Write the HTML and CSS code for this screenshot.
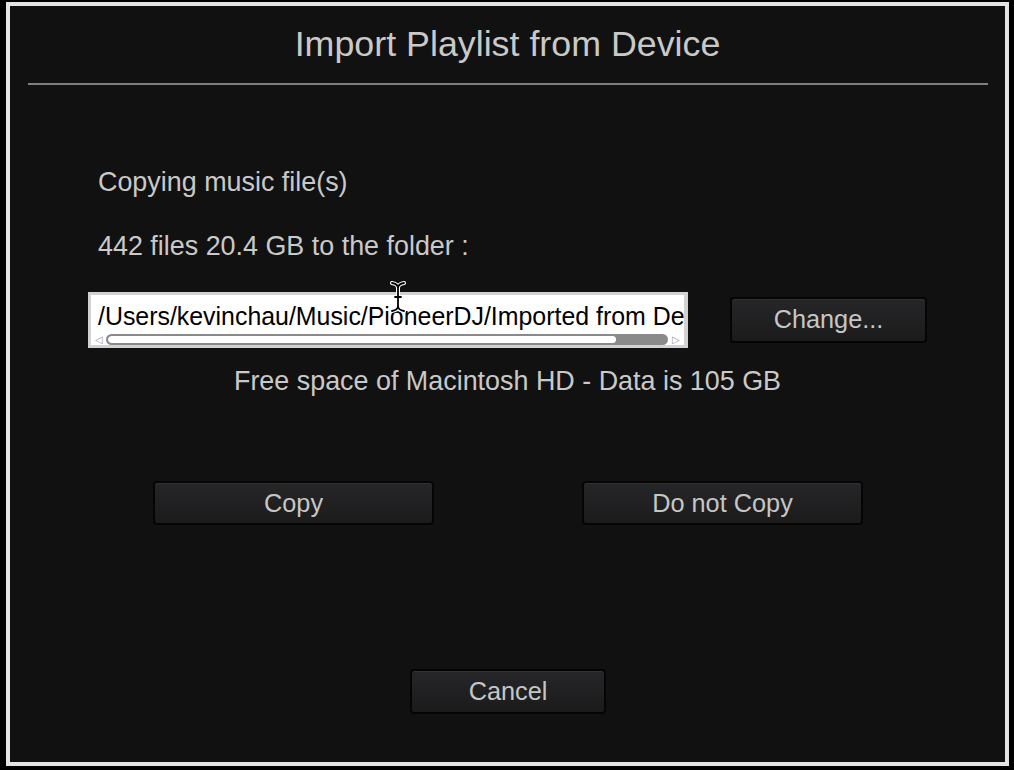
FILE: index.html
```html
<!DOCTYPE html>
<html>
<head>
<meta charset="utf-8">
<title>Import Playlist from Device</title>
<link rel="stylesheet" href="styles.css">
</head>
<body>
<div class="dialog">
  <div class="title">Import Playlist from Device</div>
  <div class="sep"></div>
  <div class="body">
    <p class="line first">Copying music file(s)</p>
    <p class="line second">442 files 20.4 GB to the folder :</p>
    <div class="pathrow">
      <div class="pathbox">
        <div class="pathtext">/Users/kevinchau/Music/PioneerDJ/Imported from Device/</div>
        <div class="scroll">
          <span class="arrow">&#9665;</span>
          <div class="track"><div class="thumb"></div></div>
          <span class="arrow">&#9655;</span>
        </div>
        <svg class="ibeam" width="18" height="32" viewBox="0 0 18 32">
          <path d="M3 2 Q9 3 9 7 Q9 3 15 2 M9 7 V25 M3 30 Q9 29 9 25 Q9 29 15 30 M6 16 H12" fill="none" stroke="#fff" stroke-width="4" stroke-linecap="round"/>
          <path d="M3 2 Q9 3 9 7 Q9 3 15 2 M9 7 V25 M3 30 Q9 29 9 25 Q9 29 15 30 M6 16 H12" fill="none" stroke="#000" stroke-width="1.8" stroke-linecap="round"/>
        </svg>
      </div>
      <button class="btn change">Change...</button>
    </div>
    <p class="line free">Free space of Macintosh HD - Data is 105 GB</p>
    <div class="choice">
      <button class="btn wide">Copy</button>
      <button class="btn wide">Do not Copy</button>
    </div>
    <div class="bottom">
      <button class="btn cancel">Cancel</button>
    </div>
  </div>
</div>
</body>
</html>
```

FILE: styles.css
```css
* { box-sizing: border-box; }
html, body { margin: 0; padding: 0; }
body {
  background: #000;
  width: 1014px;
  height: 770px;
  overflow: hidden;
  font-family: "Liberation Sans", Arial, Helvetica, sans-serif;
  padding: 2px 0 0 6px;
}
.dialog {
  width: 1003px;
  height: 764px;
  border: 4px solid #e4e4e4;
  background: #111111;
  display: flex;
  flex-direction: column;
}
.title {
  margin-top: 18px;
  height: 40px;
  line-height: 40px;
  text-align: center;
  font-size: 35.8px;
  color: #c9c9c9;
}
.sep {
  margin: 19px 17px 0 18px;
  height: 2px;
  background: #7e7e7e;
}
.body {
  flex: 1;
  display: flex;
  flex-direction: column;
}
.line {
  margin: 0;
  font-size: 26.9px;
  line-height: 32px;
  height: 32px;
  color: #c9c9c9;
  padding-left: 88px;
  white-space: nowrap;
}
.first { margin-top: 81px; }
.second { margin-top: 32px; }
.pathrow {
  margin-top: 30px;
  display: flex;
  align-items: center;
  padding-left: 78px;
}
.pathbox {
  position: relative;
  width: 600px;
  height: 56px;
  background: #fff;
  border: 3px solid #d2d2d2;
  border-right-width: 4px;
}
.pathtext {
  font-size: 24.9px;
  line-height: 28px;
  color: #000;
  white-space: nowrap;
  overflow: hidden;
  padding-left: 7px;
  margin-top: 7px;
  width: 593px;
}
.scroll {
  display: flex;
  align-items: center;
  height: 13px;
  margin-top: 3px;
  padding-left: 1px;
}
.arrow {
  font-size: 10px;
  color: #9a9a9a;
  width: 14px;
  text-align: center;
  line-height: 10px;
}
.track {
  width: 562px;
  height: 11px;
  border: 2px solid #8a8a8a;
  border-radius: 6px;
  background: #8a8a8a;
  overflow: hidden;
  margin: 0 1px 0 0;
}
.thumb {
  width: 508px;
  height: 100%;
  background: #fff;
  border-radius: 4px;
}
.ibeam {
  position: absolute;
  left: 298px;
  top: -14px;
}
.btn {
  font-family: "Liberation Sans", Arial, Helvetica, sans-serif;
  font-size: 25.3px;
  color: #c6c6c6;
  background: linear-gradient(#262628, #1b1b1c);
  border: 2px solid #050505;
  border-radius: 4px;
  box-shadow: inset 0 1px 0 #323234;
  padding: 0;
  text-align: center;
}
.change {
  width: 197px;
  height: 46px;
  margin-left: 42px;
  padding-bottom: 2px;
}
.free {
  margin-top: 17px;
  padding-left: 0;
  text-align: center;
}
.choice {
  margin-top: 84px;
  display: flex;
  justify-content: center;
  gap: 148px;
  padding-left: 1px;
}
.wide {
  width: 281px;
  height: 44px;
}
.bottom {
  margin-top: 144px;
  display: flex;
  justify-content: center;
  padding-left: 1px;
}
.cancel {
  width: 196px;
  height: 45px;
}
```
